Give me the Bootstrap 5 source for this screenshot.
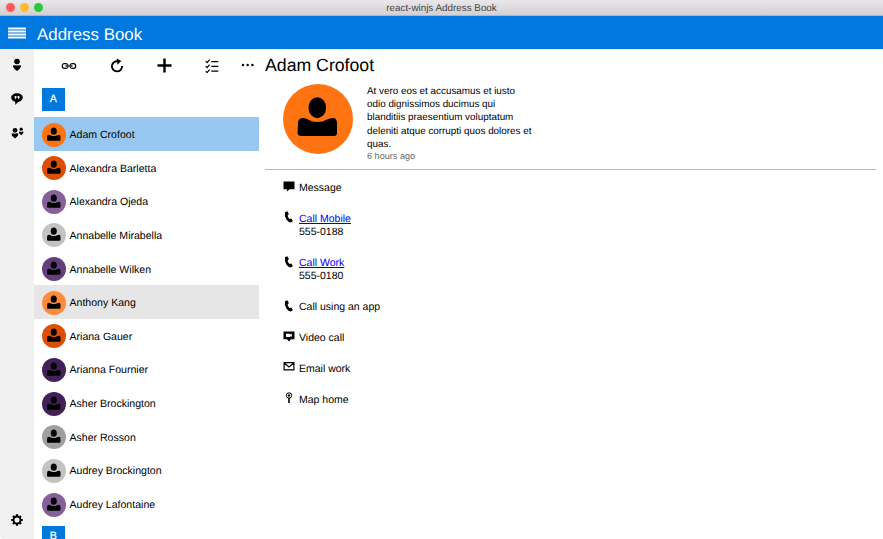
<!DOCTYPE html>
<html lang="en">
<head>
<meta charset="utf-8">
<meta name="viewport" content="width=device-width, initial-scale=1">
<title>react-winjs Address Book</title>
<link href="https://cdn.jsdelivr.net/npm/bootstrap@5.3.0/dist/css/bootstrap.min.css" rel="stylesheet">
<style>
html, body { height: 100%; }
body { font-family: "Liberation Sans", Arial, sans-serif; font-size: 10.55px; line-height: 13.4px; color: #000; text-rendering: geometricPrecision; background: #fff; }
svg { display: block; flex: none; }
.titlebar { height: 16px; background: linear-gradient(#e9e7e9, #d2d0d2); border-bottom: 1px solid #a3b9cf; font-size: 9.85px; color: #444; padding-top: 2px; }
.lights { position: absolute; left: 6px; top: 3px; gap: 5px; }
.light { width: 9px; height: 9px; border-radius: 50%; }
.appbar { height: 33px; background: #0078dd; color: #fff; font-size: 16.9px; padding: 4px 0 0 8px; }
.appbar svg { margin: -4px 11px 0 0; }
.rail { width: 34px; background: #f1f1f1; border-bottom-left-radius: 4px; }
.rail-item { height: 33.65px; display: flex; align-items: center; justify-content: center; padding-bottom: 1px; }
.people { width: 224.5px; }
.tools { height: 33px; }
.tools-lead { width: 11px; }
.tool { width: 47.8px; display: flex; justify-content: center; }
.more { margin-left: 4.5px; margin-top: -1px; }
.group-head { height: 35.2px; padding: 6px 0 0 8px; }
.group-head.next { padding-top: 5px; }
.group-tile { width: 22.5px; height: 22.5px; background: #0078dd; color: #fff; font-size: 10.6px; -webkit-text-stroke: .25px #fff; }
.person { height: 33.65px; padding-left: 8px; gap: 3.5px; padding-top: 1px; }
.person span { padding-top: 2.4px; }
.person.selected { background: #98c8f2; }
.person.hovered { background: #e6e6e6; }
.face { width: 24px; height: 24px; }
.detail { padding: 0 7px 0 6.5px; }
.detail-name { font-size: 17.7px; line-height: 24px; padding-top: 4px; height: 34.5px; }
.bio { height: 86.5px; padding-left: 17.5px; gap: 14.5px; border-bottom: 1px solid #b9b9b9; }
.bio-text { width: 167px; font-size: 9.87px; padding-top: 1px; }
.ago { font-size: 9.15px; line-height: 11px; color: #6b6b6b; margin-top: -1px; }
.actions { padding: 12px 0 0 17.5px; }
.action { gap: 4.5px; margin-bottom: 17.4px; font-size: 10.5px; }
.action svg { margin-top: -1.5px; }
.action a { color: #00e; text-decoration: underline; }
</style>
<script src="https://cdn.jsdelivr.net/npm/bootstrap@5.3.0/dist/js/bootstrap.bundle.min.js"></script>
</head>
<body class="d-flex flex-column overflow-hidden">
<svg width="0" height="0" class="position-absolute">
  <symbol id="person" viewBox="0 0 70 70"><ellipse cx="34.3" cy="23.700" rx="8.8" ry="10.5"/><path d="M15 39.500q0-5.500 5-5.500q3 0 5 1.500q4 2.500 9.300 2.500t9.700-2.500q3-1.500 6-1.500q4 0 4 5.500v9.500q0 3-3 3h-33q-3 0-3.500-3z"/></symbol>
  <symbol id="phone" viewBox="0 0 12 12"><path d="M2 1.300L4.300.2 5.900 3.100 4.600 4.400Q5 6.600 6.500 7.900L8.300 7.400 9.900 9.900 8 11.400Q5.700 11.500 3.500 8.700 1.100 4.900 2 1.300z"/></symbol>
</svg>
<header class="titlebar position-relative d-flex align-items-center justify-content-center flex-shrink-0">
  <div class="lights d-flex"><span class="light" style="background:#ff5b54"></span><span class="light" style="background:#fdbc2d"></span><span class="light" style="background:#28c940"></span></div>
  <span>react-winjs Address Book</span>
</header>
<nav class="appbar d-flex align-items-center flex-shrink-0">
  <svg width="18" height="12" fill="#fff"><path d="M0 .5h18v1.900H0zM0 3.500h18v1.900H0zM0 6.500h18v1.900H0zM0 9.500h18v1.900H0z"/></svg>
  <span>Address Book</span>
</nav>
<div class="d-flex flex-grow-1 overflow-hidden">
  <aside class="rail d-flex flex-column flex-shrink-0">
    <div class="rail-item"><svg width="12" height="14" viewBox="0 0 12 14"><circle cx="6" cy="3.500" r="2.800"/><path d="M2 7.400q2.100-.6 4 .2 1.900-.8 4-.2.500 2.300-4 5.500-4.500-3.200-4-5.500z"/></svg></div>
    <div class="rail-item"><svg width="12" height="12" viewBox="0 0 12 12"><path d="M6 .3c3.300 0 5.800 1.900 5.800 4.300S9.600 8.900 6.900 9L4.300 12 4.200 8.800C1.900 8.300.2 6.800.2 4.600.2 2.200 2.700.3 6 .3z"/><path fill="#f1f1f1" d="M3.600 3.100h1.900v1.600L4.400 6.200h-.6l.5-1.300h-.7zM6.600 3.100h1.900v1.600L7.400 6.200h-.6l.5-1.300h-.7z"/></svg></div>
    <div class="rail-item"><svg width="13" height="12" viewBox="0 0 13 12"><circle cx="4" cy="3.300" r="2.400"/><path d="M.6 6.600q1.800-.6 3.400.2 1.600-.8 3.400-.2.400 2.300-3.400 4.900-3.800-2.600-3.400-4.900z"/><circle cx="10.200" cy="2.200" r="1.600"/><path d="M7.900 4.800q1.200-.5 2.300.1 1.100-.6 2.400-.1.200 1.800-2.400 3.500-2.500-1.700-2.300-3.500z"/></svg></div>
    <div class="rail-item mt-auto"><svg width="12" height="12" viewBox="-6 -6 12 12" class="mb-1"><circle r="3.500" fill="none" stroke="#000" stroke-width="1.900"/><g stroke="#000" stroke-width="2.200"><path d="M0-5.700v2M0 3.700v2M-5.700 0h2M3.700 0h2M-4-4l1.300 1.300M2.700 2.700l1.300 1.300M-4 4l1.300-1.300M2.700-2.700L4-4"/></g></svg></div>
  </aside>
  <section class="people flex-shrink-0">
    <div class="tools d-flex align-items-center"></div>
    <div class="group-head"><div class="group-tile d-flex align-items-center justify-content-center">A</div></div>
    <div id="people-list"></div>
    <div class="group-head next"><div class="group-tile d-flex align-items-center justify-content-center">B</div></div>
  </section>
  <main class="detail flex-grow-1">
    <h1 class="detail-name fw-normal m-0">Adam Crofoot</h1>
    <div class="bio d-flex">
      <svg width="70" height="70" viewBox="0 0 70 70"><circle cx="35" cy="35" r="35" fill="#ff7310"/><use href="#person" width="70" height="70"/></svg>
      <div class="bio-text">At vero eos et accusamus et iusto odio dignissimos ducimus qui blanditiis praesentium voluptatum deleniti atque corrupti quos dolores et quas.<div class="ago">6 hours ago</div></div>
    </div>
    <div class="actions">
      <div class="action d-flex"><svg width="12" height="12"><path d="M.5.500h11v7.700H6.500L4 10.500V8.200H.5z"/></svg><div>Message</div></div>
      <div class="action d-flex"><svg width="12" height="12"><use href="#phone"/></svg><div><a href="#">Call Mobile</a><br>555-0188</div></div>
      <div class="action d-flex"><svg width="12" height="12"><use href="#phone"/></svg><div><a href="#">Call Work</a><br>555-0180</div></div>
      <div class="action d-flex"><svg width="12" height="12"><use href="#phone"/></svg><div>Call using an app</div></div>
      <div class="action d-flex"><svg width="12" height="12"><path fill-rule="evenodd" d="M.5.500h11v7.800H8L6 10.500 4 8.300H.5zM3 2.700v3.200h4.300V5l1.500.9V2.700l-1.500.9v-.9z"/></svg><div>Video call</div></div>
      <div class="action d-flex"><svg width="12" height="12" fill="none" stroke="#000" stroke-width="1.200"><path d="M1.100 1.600h9.800v7.200H1.100zM1.300 2l4.700 4 4.700-4"/></svg><div>Email work</div></div>
      <div class="action d-flex"><svg width="12" height="12"><circle cx="6" cy="3.500" r="2.700" fill="none" stroke="#000"/><circle cx="6" cy="3.500" r="1.200"/><path d="M5.200 6h1.600v5H5.200z"/></svg><div>Map home</div></div>
    </div>
  </main>
</div>
<script>
const people = [
  ["Adam Crofoot", "#ff7310", "selected"], ["Alexandra Barletta", "#dc4f04"], ["Alexandra Ojeda", "#87609a"],
  ["Annabelle Mirabella", "#c3c3c3"], ["Annabelle Wilken", "#643f7c"], ["Anthony Kang", "#ff8a3c", "hovered"],
  ["Ariana Gauer", "#dc4f04"], ["Arianna Fournier", "#432158"], ["Asher Brockington", "#432158"],
  ["Asher Rosson", "#a0a0a0"], ["Audrey Brockington", "#c3c3c3"], ["Audrey Lafontaine", "#87609a"]
];
document.getElementById("people-list").innerHTML = people.map(([name, color, state = ""]) =>
  `<div class="person d-flex align-items-center ${state}"><svg class="face" viewBox="0 0 70 70"><circle cx="35" cy="35" r="35" fill="${color}"/><use href="#person" width="70" height="70"/></svg><span>${name}</span></div>`).join("");
const icons = [
  '<svg width="16" height="8" fill="none" stroke="#000" stroke-width="1.200"><path d="M7 2.900Q6.500 1.600 4.500 1.600h-1Q1.300 1.600 1.300 4t2.200 2.400h1Q6.500 6.400 7 5.100M9 2.900q.5-1.300 2.500-1.300h1q2.200 0 2.200 2.400t-2.200 2.400h-1Q9.500 6.400 9 5.100"/><path d="M4.500 4h7" stroke-width="1.400"/></svg>',
  '<svg width="14" height="16"><path d="M8 3.300A5.100 5.100 0 1 0 12.100 8" fill="none" stroke="#000" stroke-width="1.900"/><path d="M6.700.6l4.600 2.500-3.800 3.700z"/></svg>',
  '<svg width="15" height="15"><path d="M6.300.5h2.400v5.800h5.800v2.400H8.700v5.800H6.300V8.700H.5V6.300h5.800z"/></svg>',
  '<svg width="14" height="14" fill="none" stroke="#000" stroke-width="1.200"><path d="M.7 2.200l1.400 1.400L4.600.6M.7 7.200l1.400 1.400 2.500-3M.7 12.200l1.400 1.400 2.500-3M6.300 2.700h7M6.300 7.400h7M6.300 12.100h7"/></svg>'
];
document.querySelector(".tools").innerHTML = '<div class="tools-lead"></div>' +
  icons.map(i => `<div class="tool">${i}</div>`).join("") +
  '<svg class="more" width="14" height="4"><circle cx="2" cy="2" r="1.200"/><circle cx="6.700" cy="2" r="1.200"/><circle cx="11.400" cy="2" r="1.200"/></svg>';
</script>
</body>
</html>
